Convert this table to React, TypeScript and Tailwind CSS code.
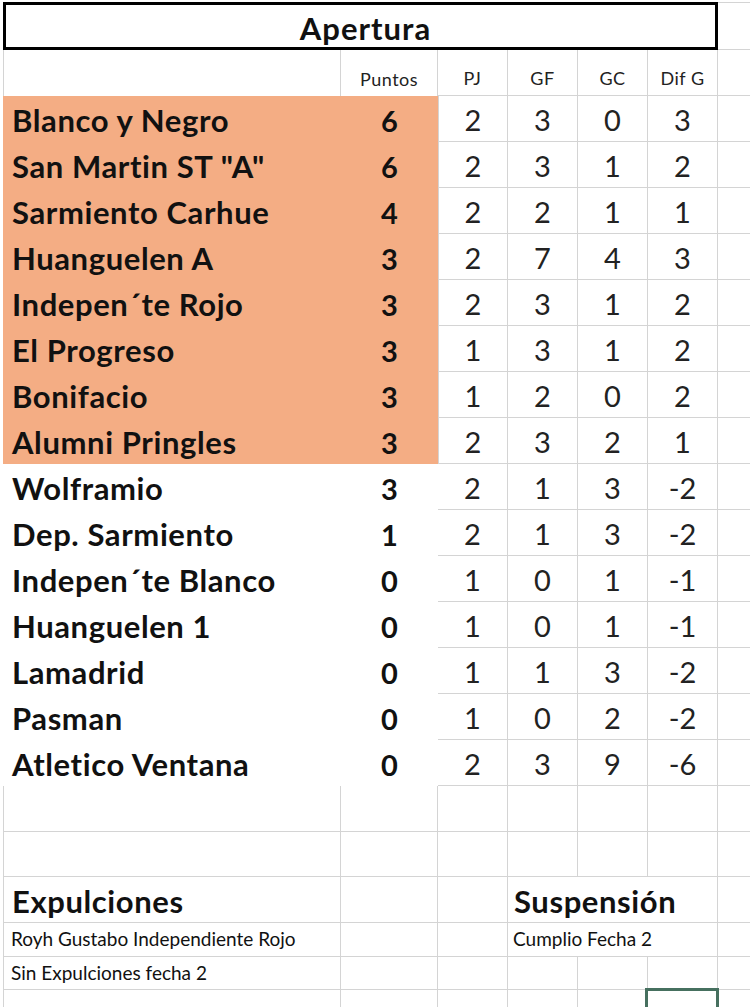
import React from "react";

const teams: [string, number, number, number, number, number][] = [
  ["Blanco y Negro", 6, 2, 3, 0, 3],
  ['San Martin ST "A"', 6, 2, 3, 1, 2],
  ["Sarmiento Carhue", 4, 2, 2, 1, 1],
  ["Huanguelen A", 3, 2, 7, 4, 3],
  ["Indepen´te Rojo", 3, 2, 3, 1, 2],
  ["El Progreso", 3, 1, 3, 1, 2],
  ["Bonifacio", 3, 1, 2, 0, 2],
  ["Alumni Pringles", 3, 2, 3, 2, 1],
  ["Wolframio", 3, 2, 1, 3, -2],
  ["Dep. Sarmiento", 1, 2, 1, 3, -2],
  ["Indepen´te Blanco", 0, 1, 0, 1, -1],
  ["Huanguelen 1", 0, 1, 0, 1, -1],
  ["Lamadrid", 0, 1, 1, 3, -2],
  ["Pasman", 0, 1, 0, 2, -2],
  ["Atletico Ventana", 0, 2, 3, 9, -6],
];

const FONT = { fontFamily: "Lato, 'Open Sans', sans-serif" };

export default function App() {
  return (
    <div
      className="w-[750px] h-[1007px] overflow-hidden bg-white pl-[3px] pt-[2px] text-[#111]"
      style={FONT}
    >
      <div className="grid grid-cols-[338px_97px_70px_70px_70px_70px_32px] border-[#d4d4d4]">
        {/* Title row */}
        <div className="col-span-6 h-[48px] border-[3px] border-black flex items-center justify-center">
          <span className="text-[31px] font-bold tracking-[1px] pl-[10px] pt-[5px]">Apertura</span>
        </div>
        <div className="h-[48px] border-t border-b border-[#d4d4d4]" />

        {/* Header row */}
        <div className="h-[46px] border-l border-r border-[#d4d4d4]" />
        <div className="h-[46px] border-r border-[#d4d4d4] flex items-end justify-center pb-[3px] text-[18px] tracking-[0.5px] text-[#222]">
          Puntos
        </div>
        {["PJ", "GF", "GC", "Dif G"].map((h) => (
          <div
            key={h}
            className="h-[46px] border-r border-b border-[#d4d4d4] flex items-end justify-center pb-[3px] text-[18px] tracking-[0.5px] text-[#222]"
          >
            {h}
          </div>
        ))}
        <div className="h-[46px] border-b border-[#d4d4d4]" />

        {/* Data rows */}
        {teams.map((t, i) => {
          const orange = i < 8;
          const bg = orange ? "bg-[#f4ad84]" : "bg-white";
          return (
            <React.Fragment key={t[0]}>
              <div
                className={`h-[46px] ${bg} flex items-center pl-[9px] pt-[3px] text-[31px] tracking-[0.6px] font-bold whitespace-nowrap`}
              >
                {t[0]}
              </div>
              <div
                className={`h-[46px] ${bg} flex items-center justify-center pt-[3px] text-[29px] font-bold`}
              >
                {t[1]}
              </div>
              {[t[2], t[3], t[4], t[5]].map((v, j) => (
                <div
                  key={j}
                  className={`h-[46px] border-r border-b border-[#d4d4d4] ${
                    j === 0 && orange ? "border-l" : ""
                  } flex items-center justify-center pt-[3px] text-[29px] text-[#222]`}
                >
                  {v}
                </div>
              ))}
              <div className="h-[46px] border-b border-[#d4d4d4]" />
            </React.Fragment>
          );
        })}

        {/* Empty rows */}
        {[46, 45].map((h, r) => (
          <React.Fragment key={r}>
            {[0, 1, 2, 3, 4, 5].map((c) => (
              <div
                key={c}
                className={`${h === 46 ? "h-[46px]" : "h-[45px]"} border-r border-b border-[#d4d4d4] ${
                  c === 0 ? "border-l" : ""
                }`}
              />
            ))}
            <div className={`${h === 46 ? "h-[46px]" : "h-[45px]"} border-b border-[#d4d4d4]`} />
          </React.Fragment>
        ))}

        {/* Expulciones / Suspensión */}
        <div className="h-[46px] border-l border-r border-b border-[#d4d4d4] flex items-center pl-[8px] pt-[3px] text-[31px] tracking-[0.6px] font-bold">
          Expulciones
        </div>
        <div className="h-[46px] border-r border-b border-[#d4d4d4]" />
        <div className="h-[46px] border-r border-b border-[#d4d4d4]" />
        <div className="col-span-3 h-[46px] border-r border-b border-[#d4d4d4] flex items-center pl-[6px] pt-[3px] text-[31px] tracking-[0.6px] font-bold whitespace-nowrap">
          Suspensión
        </div>
        <div className="h-[46px] border-b border-[#d4d4d4]" />

        {/* Royh / Cumplio */}
        <div className="h-[34px] border-l border-r border-b border-[#d4d4d4] flex items-center pl-[7px] text-[19px] whitespace-nowrap">
          Royh Gustabo Independiente Rojo
        </div>
        <div className="h-[34px] border-r border-b border-[#d4d4d4]" />
        <div className="h-[34px] border-r border-b border-[#d4d4d4]" />
        <div className="col-span-3 h-[34px] border-r border-b border-[#d4d4d4] flex items-center pl-[5px] text-[19px] whitespace-nowrap">
          Cumplio Fecha 2
        </div>
        <div className="h-[34px] border-b border-[#d4d4d4]" />

        {/* Sin Expulciones */}
        <div className="h-[33px] border-l border-r border-b border-[#d4d4d4] flex items-center pl-[7px] text-[19px] whitespace-nowrap">
          Sin Expulciones fecha 2
        </div>
        {[0, 1, 2, 3, 4].map((c) => (
          <div key={c} className="h-[33px] border-r border-b border-[#d4d4d4]" />
        ))}
        <div className="h-[33px] border-b border-[#d4d4d4]" />

        {/* Last row with selection */}
        <div className="h-[40px] border-l border-r border-b border-[#d4d4d4]" />
        {[0, 1, 2, 3].map((c) => (
          <div key={c} className="h-[40px] border-r border-b border-[#d4d4d4]" />
        ))}
        <div className="h-[40px] border-r border-b border-[#d4d4d4] relative">
          <div className="absolute -left-[3px] -top-[2px] w-[74px] h-[40px] border-[3px] border-[#46705f]" />
        </div>
        <div className="h-[40px] border-b border-[#d4d4d4]" />
      </div>
    </div>
  );
}
